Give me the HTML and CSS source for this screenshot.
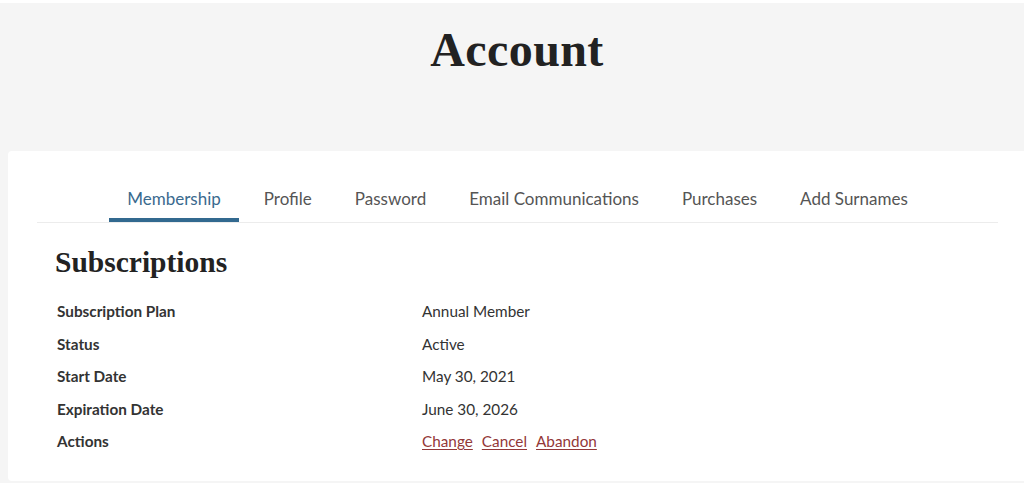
FILE: index.html
```html
<!DOCTYPE html>
<html lang="en">
<head>
<meta charset="utf-8">
<title>Account</title>
<link rel="stylesheet" href="styles.css">
</head>
<body>
<div class="page">
  <header class="hero">
    <h1 class="hero-title">Account</h1>
  </header>
  <section class="card">
    <nav class="tabs">
      <ul class="tab-list">
        <li class="tab tab-active">Membership</li>
        <li class="tab">Profile</li>
        <li class="tab">Password</li>
        <li class="tab">Email Communications</li>
        <li class="tab">Purchases</li>
        <li class="tab">Add Surnames</li>
      </ul>
    </nav>
    <div class="panel">
      <h2 class="panel-title">Subscriptions</h2>
      <dl class="details">
        <dt class="label">Subscription Plan</dt>
        <dd class="value">Annual Member</dd>
        <dt class="label">Status</dt>
        <dd class="value">Active</dd>
        <dt class="label">Start Date</dt>
        <dd class="value">May 30, 2021</dd>
        <dt class="label">Expiration Date</dt>
        <dd class="value">June 30, 2026</dd>
        <dt class="label">Actions</dt>
        <dd class="value actions">
          <a class="action-link" href="#">Change</a>
          <a class="action-link" href="#">Cancel</a>
          <a class="action-link" href="#">Abandon</a>
        </dd>
      </dl>
    </div>
  </section>
</div>
</body>
</html>
```

FILE: styles.css
```css
html, body {
  margin: 0;
  padding: 0;
  background: #ffffff;
  overflow: hidden;
}

body {
  font-family: Lato, "Open Sans", sans-serif;
  color: #333333;
}

.page {
  margin-top: 3px;
  background: #f5f5f5;
  height: 480px;
}

.hero {
  height: 148px;
  display: flex;
  justify-content: center;
  padding-left: 10px;
  box-sizing: border-box;
}

.hero-title {
  margin: 0;
  padding-top: 17px;
  font-family: "Liberation Serif", "Times New Roman", serif;
  font-weight: 700;
  font-size: 48px;
  line-height: 60px;
  color: #222222;
  letter-spacing: 0.4px;
}

.card {
  margin-left: 8px;
  background: #ffffff;
  border-radius: 4px 0 0 4px;
  padding: 0 26px 0 29px;
  height: 330px;
  box-sizing: border-box;
}

.tabs {
  padding-top: 31px;
  border-bottom: 1px solid #ececec;
}

.tab-list {
  list-style: none;
  margin: 0;
  padding: 0;
  display: flex;
  justify-content: center;
  gap: 7px;
}

.tab {
  padding: 6px 18px 8px;
  font-size: 17px;
  line-height: 22px;
  color: #555555;
  border-bottom: 4px solid transparent;
}

.tab-active {
  color: #3a6a8e;
  border-bottom-color: #32698f;
}

.panel {
  padding: 21px 0 0 18px;
}

.panel-title {
  margin: 0 0 22px;
  font-family: "Liberation Serif", "Times New Roman", serif;
  font-weight: 700;
  font-size: 29.5px;
  line-height: 36px;
  color: #222222;
}

.details {
  margin: 0;
  display: grid;
  grid-template-columns: 367px 1fr;
  row-gap: 14px;
  font-size: 15.3px;
  line-height: 18.5px;
}

.label {
  margin: 0;
  padding-left: 2px;
  font-weight: 700;
  color: #333333;
}

.value {
  margin: 0;
  color: #333333;
}

.actions {
  display: flex;
  gap: 9px;
}

.action-link {
  color: #933838;
  text-decoration: underline;
  text-underline-offset: 2px;
}
```
